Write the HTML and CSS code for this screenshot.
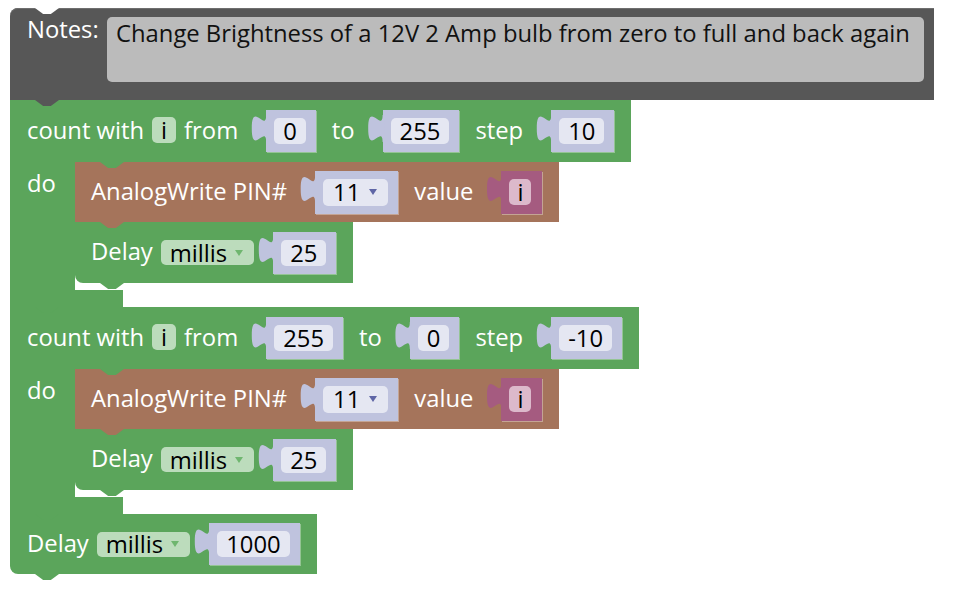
FILE: index.html
```html
<!DOCTYPE html>
<html lang="en">
<head>
  <meta charset="UTF-8">
  <title>Bulb Brightness Blocks</title>
  <link rel="stylesheet" href="styles.css">
</head>
<body>
  <div class="workspace">

    <div class="block notes">
      <span class="label">Notes:</span>
      <div class="note-text">Change Brightness of a 12V 2 Amp bulb from zero to full and back again</div>
    </div>

    <div class="block loop">
      <div class="row head">
        <span class="label">count with</span>
        <span class="var">i</span>
        <span class="label">from</span>
        <span class="socket"><span class="field">0</span></span>
        <span class="label">to</span>
        <span class="socket"><span class="field">255</span></span>
        <span class="label">step</span>
        <span class="socket"><span class="field">10</span></span>
      </div>
      <div class="body">
        <div class="spine"><span class="label">do</span></div>
        <div class="stack">
          <div class="block row analog">
            <span class="label">AnalogWrite PIN#</span>
            <span class="socket"><span class="field pin">11<span class="arrow"></span></span></span>
            <span class="label">value</span>
            <span class="socket var-socket"><span class="field">i</span></span>
          </div>
          <div class="block row delay">
            <span class="label">Delay</span>
            <span class="dropdown">millis<span class="arrow"></span></span>
            <span class="socket"><span class="field">25</span></span>
          </div>
        </div>
      </div>
      <div class="foot"></div>
    </div>

    <div class="block loop">
      <div class="row head">
        <span class="label">count with</span>
        <span class="var">i</span>
        <span class="label">from</span>
        <span class="socket"><span class="field">255</span></span>
        <span class="label">to</span>
        <span class="socket"><span class="field">0</span></span>
        <span class="label">step</span>
        <span class="socket"><span class="field">-10</span></span>
      </div>
      <div class="body">
        <div class="spine"><span class="label">do</span></div>
        <div class="stack">
          <div class="block row analog">
            <span class="label">AnalogWrite PIN#</span>
            <span class="socket"><span class="field pin">11<span class="arrow"></span></span></span>
            <span class="label">value</span>
            <span class="socket var-socket"><span class="field">i</span></span>
          </div>
          <div class="block row delay">
            <span class="label">Delay</span>
            <span class="dropdown">millis<span class="arrow"></span></span>
            <span class="socket"><span class="field">25</span></span>
          </div>
        </div>
      </div>
      <div class="foot"></div>
    </div>

    <div class="block row delay last">
      <span class="label">Delay</span>
      <span class="dropdown">millis<span class="arrow"></span></span>
      <span class="socket"><span class="field">1000</span></span>
    </div>

  </div>
</body>
</html>
```

FILE: styles.css
```css
body {
  margin: 0;
  background: #fff;
  font-family: 'Open Sans', 'Noto Sans', sans-serif;
  font-size: 23.8px;
  line-height: 24px;
}

.workspace {
  padding: 8px 0 20px 10px;
  display: flex;
  flex-direction: column;
  align-items: flex-start;
}

.block {
  position: relative;
}

.label {
  color: #fff;
  white-space: nowrap;
}

/* connection tabs between stacked blocks */
.block::after {
  content: "";
  position: absolute;
  left: 25px;
  bottom: -6px;
  width: 24px;
  height: 6px;
  z-index: 2;
  clip-path: polygon(0 0, 100% 0, 66% 100%, 34% 100%);
}

.notes::before,
.stack > .block:first-child::before {
  content: "";
  position: absolute;
  left: 25px;
  top: 0;
  width: 24px;
  height: 6px;
  z-index: 2;
  clip-path: polygon(0 0, 100% 0, 66% 100%, 34% 100%);
}

/* notes */
.notes {
  width: 924px;
  height: 92px;
  box-sizing: border-box;
  display: flex;
  align-items: flex-start;
  padding: 9px 10px 0 17px;
  background: #575757;
  border-radius: 8px 0 0 0;
  box-shadow: inset 0 1px 0 #6e6e6e;
}

.notes::before { background: #fff; }
.notes::after { background: #575757; }

.notes .label {
  width: 80px;
  flex: none;
}

.note-text {
  flex: 1;
  height: 65px;
  box-sizing: border-box;
  padding: 4px 9px;
  background: #bbbbbb;
  border-radius: 5px;
  color: #111;
}

/* rows */
.row {
  display: flex;
  align-items: center;
  padding: 0 17px 0 17px;
}

.row > .label {
  margin-bottom: 3px;
}

.row > * + * { margin-left: 8px; }
.row > .socket { margin-left: 28px; }
.row > .dropdown + .socket { margin-left: 19px; }
.row > .socket + .label { margin-left: 16px; }

/* loop */
.head {
  height: 62px;
  background: #5ba55b;
}

.body {
  display: flex;
}

.spine {
  width: 65px;
  flex: none;
  box-sizing: border-box;
  padding: 9px 0 0 17px;
  background: #5ba55b;
}

.stack {
  display: flex;
  flex-direction: column;
  align-items: flex-start;
  padding-bottom: 7px;
}

.stack > .block:first-child::before { background: #5ba55b; }

.foot {
  width: 113px;
  height: 17px;
  background: #5ba55b;
}

.loop::after { background: #5ba55b; }

.analog {
  height: 60px;
  padding-left: 16px;
  background: #a5745b;
}

.analog::after { background: #a5745b; }

.delay {
  height: 61px;
  padding-left: 16px;
  background: #5ba55b;
}

.stack .delay {
  border-bottom-left-radius: 8px;
}

.delay::after { background: #5ba55b; }

.delay.last {
  height: 60px;
  padding-left: 17px;
  border-bottom-left-radius: 8px;
}

/* inputs */
.socket {
  position: relative;
  display: flex;
  align-items: center;
  height: 42px;
  padding: 0 10px 0 8px;
  background: #bfc3de;
  box-shadow: 1px 1px 0 rgba(255, 255, 255, 0.35);
}

.socket::before {
  content: "";
  position: absolute;
  left: -15px;
  top: 3px;
  width: 17px;
  height: 31px;
  background: inherit;
  clip-path: path("M15 2 C15 20 0.6 -12.4 0.6 15.5 C0.6 43.4 15 11 15 29 L17 29 L17 2 Z");
}

.analog .socket {
  height: 43px;
}

.field {
  display: flex;
  align-items: center;
  height: 26px;
  padding: 0 9px;
  background: #e5e7f2;
  border-radius: 5px;
  color: #000;
}

.field.pin {
  height: 27px;
  padding: 0 11px 0 10px;
}

.var-socket {
  background: #a55b80;
  padding-right: 11px;
}

.var-socket .field {
  background: #dcb9cb;
  padding: 0 8px;
}

.var {
  display: flex;
  align-items: center;
  justify-content: center;
  width: 24px;
  height: 26px;
  margin-bottom: 2px;
  background: #bcdcbc;
  border-radius: 5px;
  color: #000;
}

.dropdown {
  display: flex;
  align-items: center;
  height: 25px;
  padding: 0 11px 0 9px;
  background: #bcdcbc;
  border-radius: 5px;
  color: #000;
}

.arrow {
  width: 0;
  height: 0;
  margin-left: 8px;
  border-left: 4px solid transparent;
  border-right: 4px solid transparent;
  border-top: 6px solid #6fb66f;
}

.pin .arrow {
  margin-left: 9px;
  border-top-color: #5f66a6;
}
```
